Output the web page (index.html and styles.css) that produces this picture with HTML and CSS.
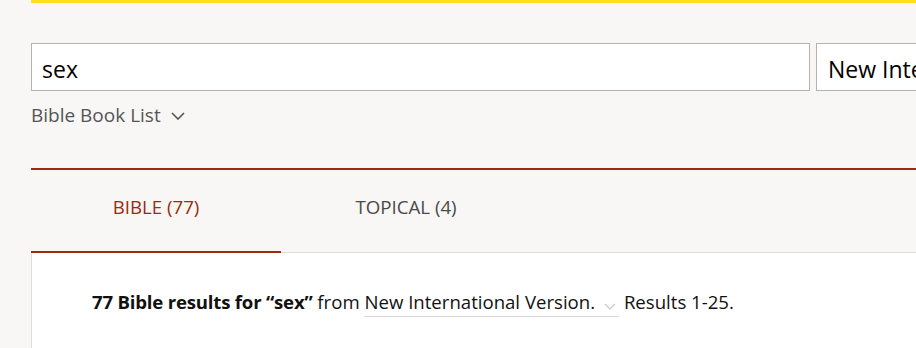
FILE: index.html
```html
<!DOCTYPE html>
<html lang="en">
<head>
<meta charset="utf-8">
<title>Bible search: sex</title>
<link rel="stylesheet" href="styles.css">
</head>
<body>
<div class="page">
  <div class="topbar"></div>
  <form class="search">
    <div class="search-row">
      <div class="field query">sex</div>
      <div class="field version">New International Version (NIV)</div>
    </div>
    <div class="book-list">
      <span>Bible Book List</span>
      <svg class="chev" width="14" height="8" viewBox="0 0 14 8"><path d="M1 1 L7 7 L13 1" fill="none" stroke="#555" stroke-width="1.6"/></svg>
    </div>
  </form>
  <section class="results">
    <nav class="tabs">
      <div class="tab active">BIBLE (77)</div>
      <div class="tab">TOPICAL (4)</div>
    </nav>
    <div class="panel">
      <p class="summary"><strong>77 Bible results for “sex”</strong> from <span class="version-select">New International Version.<svg class="sel-chev" width="12" height="7" viewBox="0 0 12 7"><path d="M1 1 L6 6 L11 1" fill="none" stroke="#c8c8c8" stroke-width="1.2"/></svg></span> Results 1-25.</p>
    </div>
  </section>
</div>
</body>
</html>
```
FILE: styles.css
```css
html, body {
  margin: 0;
  padding: 0;
  background: #f8f7f5;
  overflow: hidden;
}
body {
  font-family: "Open Sans", "Noto Sans", sans-serif;
  color: #111;
}
.page {
  margin-left: 31px;
  width: 1200px;
}
.topbar {
  height: 3px;
  background: #fede1c;
}
.search {
  padding-top: 40px;
}
.search-row {
  display: flex;
  gap: 6px;
}
.field {
  box-sizing: border-box;
  height: 48px;
  border: 1px solid #b3b3b3;
  background: #fff;
  font-size: 23px;
  line-height: 46px;
  padding: 2px 0 0 10px;
  color: #000;
  white-space: nowrap;
  overflow: hidden;
}
.query { width: 779px; }
.version { width: 340px; padding-left: 11px; }
.book-list {
  display: flex;
  align-items: center;
  gap: 10px;
  margin-top: 10px;
  font-size: 19px;
  line-height: 28px;
  color: #555;
}
.chev { margin-top: 2px; }
.results {
  margin-top: 39px;
  border-top: 2px solid #9b2a0e;
}
.tabs {
  display: flex;
  border-bottom: 1px solid #dcdcdc;
}
.tab {
  box-sizing: border-box;
  width: 250px;
  height: 83px;
  margin-bottom: -1px;
  padding-bottom: 8px;
  display: flex;
  align-items: center;
  justify-content: center;
  font-size: 18.7px;
  color: #4a4a4a;
  border-bottom: 2px solid transparent;
}
.tab.active {
  color: #9b2a0e;
  border-bottom-color: #9b2a0e;
}
.panel {
  background: #fff;
  border-left: 1px solid #dcdcdc;
  padding: 36px 0 40px 60px;
}
.summary {
  margin: 0;
  font-size: 18.6px;
  line-height: 26px;
  color: #111;
  white-space: nowrap;
}
.summary strong { font-weight: 700; letter-spacing: -0.2px; }
.version-select {
  display: inline-flex;
  align-items: center;
  gap: 9px;
  padding-right: 3px;
  padding-bottom: 2px;
  border-bottom: 1px solid #d6d6d6;
  line-height: 24px;
}
.sel-chev { margin-top: 8px; }
```
